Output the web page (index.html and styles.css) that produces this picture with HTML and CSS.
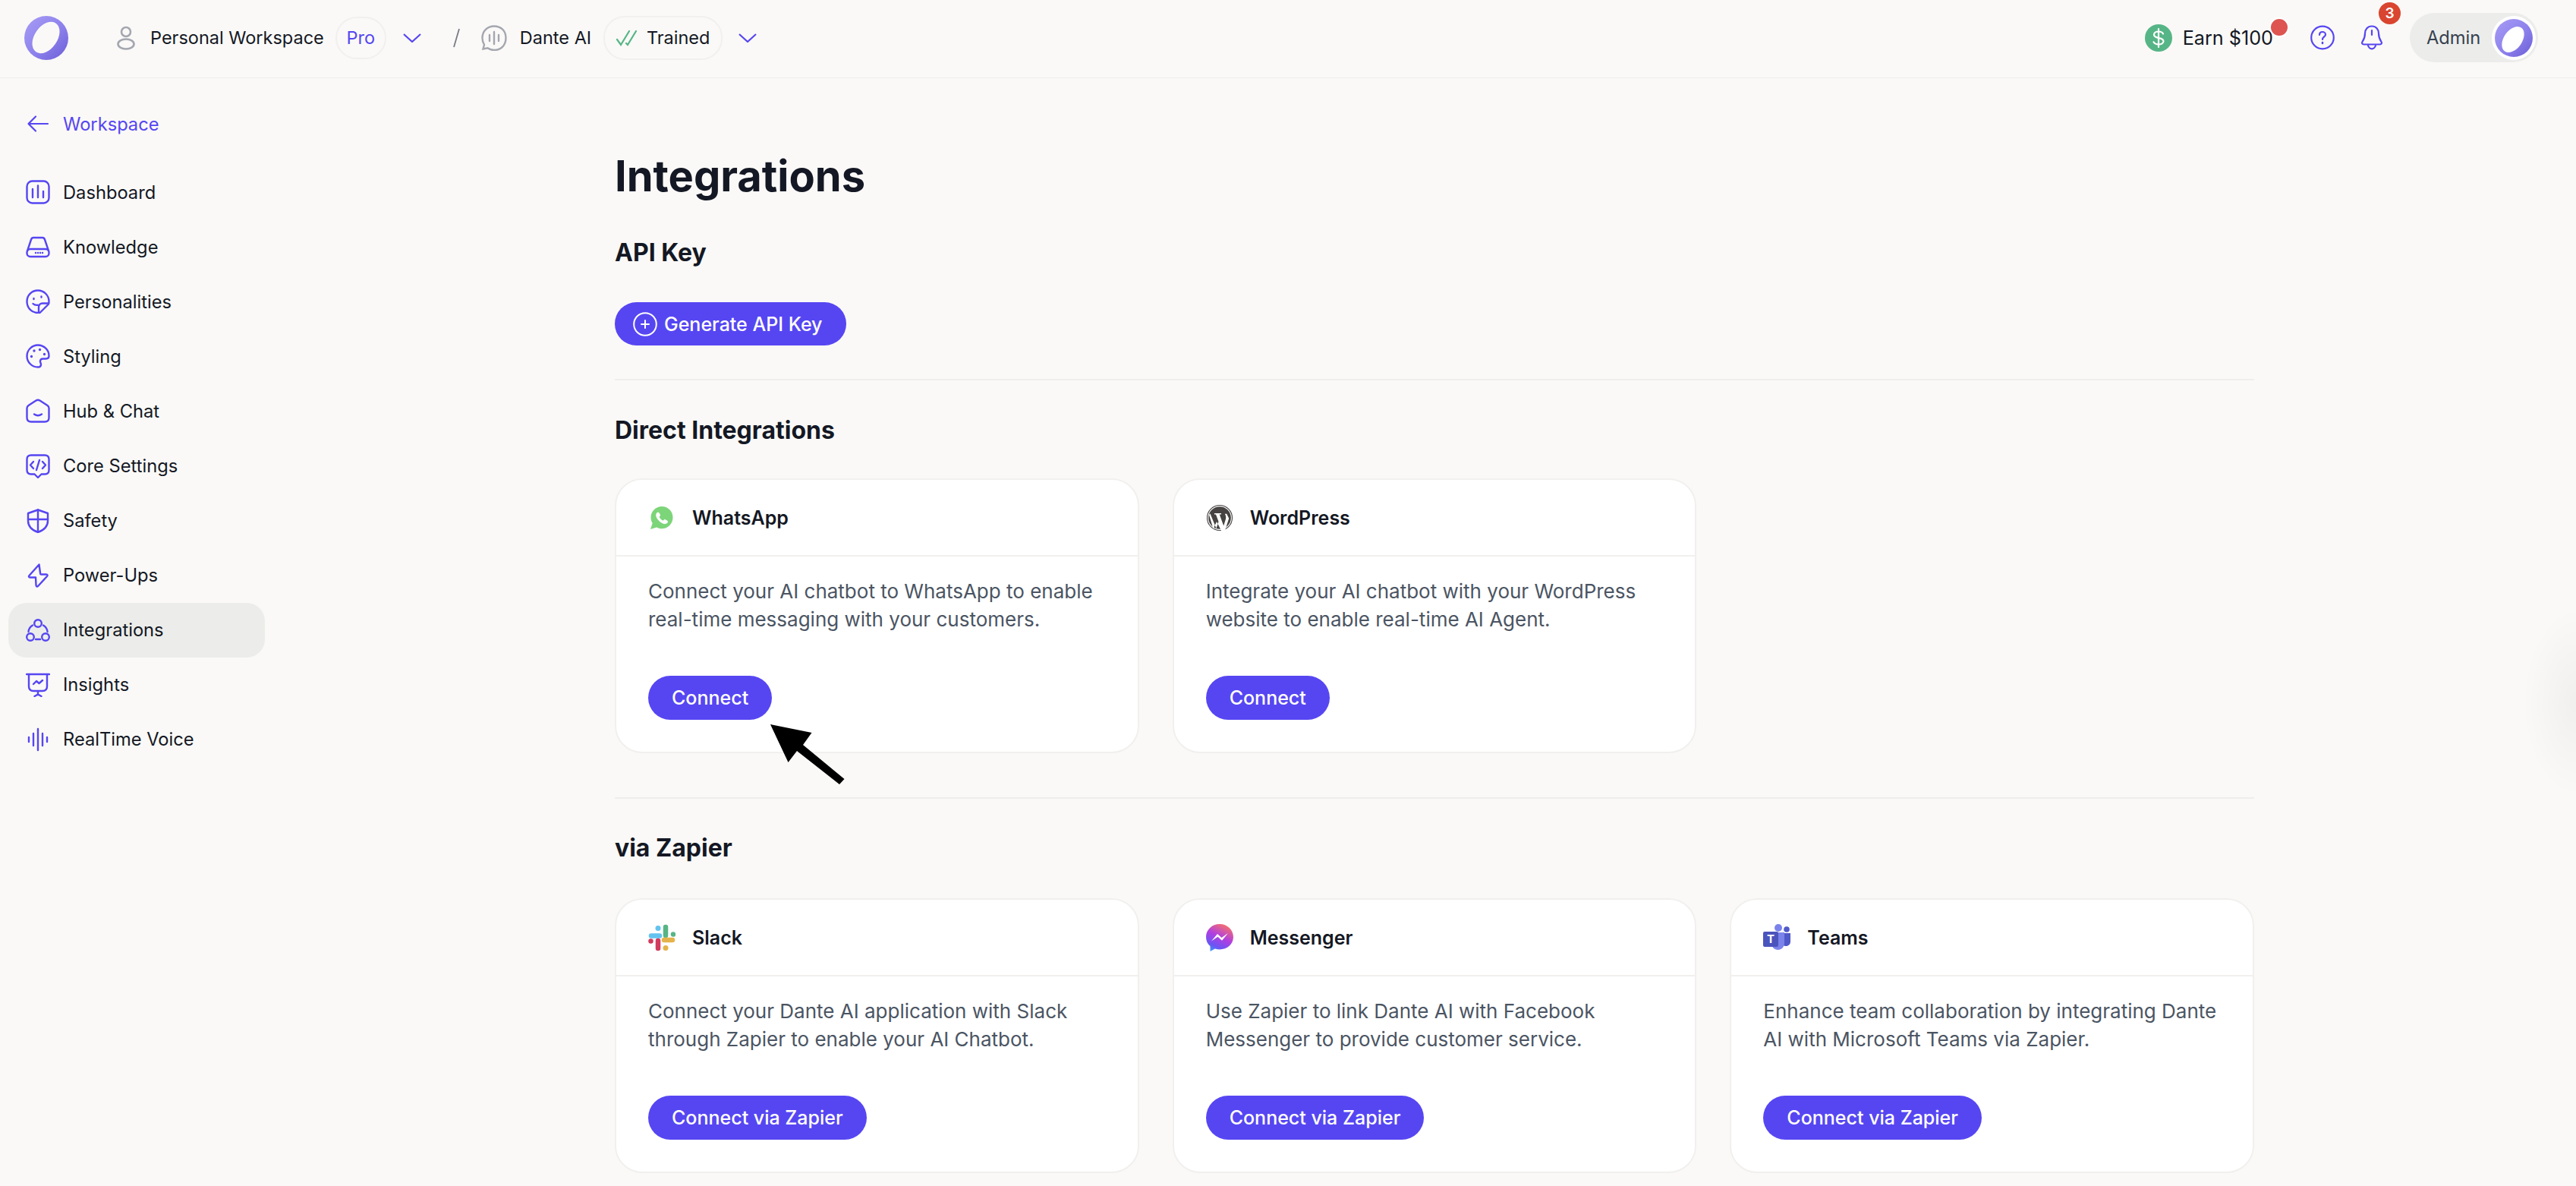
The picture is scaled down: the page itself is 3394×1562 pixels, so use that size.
FILE: index.html
```html
<!DOCTYPE html>
<html lang="en">
<head>
  <meta charset="UTF-8" />
  <title>Integrations - Dante AI</title>
  <link rel="stylesheet" href="styles.css">
</head>
<body>

<svg class="defs" width="0" height="0">
  <defs>
    <linearGradient id="ringGrad" x1="0" y1="0" x2="1" y2="1">
      <stop offset="0" stop-color="#a79df5"/>
      <stop offset="0.55" stop-color="#8d81ec"/>
      <stop offset="1" stop-color="#6a5dd6"/>
    </linearGradient>
    <linearGradient id="messengerGrad" x1="0.7" y1="0" x2="0.2" y2="1">
      <stop offset="0" stop-color="#f7716a"/>
      <stop offset="0.45" stop-color="#b13fe0"/>
      <stop offset="0.8" stop-color="#6a55f5"/>
      <stop offset="1" stop-color="#3f9cf5"/>
    </linearGradient>
  </defs>
</svg>

<header class="topbar">
  <div class="topbar-group">
    <svg class="logo" viewBox="0 0 58 58">
      <circle cx="29" cy="29" r="29" fill="url(#ringGrad)"/>
      <ellipse cx="28.500" cy="28.500" rx="15" ry="23" transform="rotate(35 28.500 28.500)" fill="#faf9f7"/>
    </svg>
    <svg class="ic-person" viewBox="0 0 24 32" fill="none" stroke="#a4a7b0" stroke-width="2.6">
      <circle cx="12" cy="8" r="6"/>
      <ellipse cx="12" cy="24" rx="10.500" ry="6.500"/>
    </svg>
    <span class="crumb workspace">Personal Workspace</span>
    <span class="pill pill-pro">Pro</span>
    <svg class="chevron chevron-first" viewBox="0 0 24 12" fill="none" stroke="#5646f2" stroke-width="2.2"><path d="M1 1l11 10L23 1"/></svg>
    <svg class="slash" viewBox="0 0 9 26" fill="none" stroke="#777b85" stroke-width="1.8"><path d="M8 1L1 25"/></svg>
    <svg class="ic-bubble" viewBox="0 0 34 34" fill="none" stroke="#a4a7b0" stroke-width="2.4" stroke-linecap="round">
      <path d="M17 1.500C8 1.500 1.500 8 1.500 17c0 3.500 1 6.500 2.500 9l-1.500 5.500 6-1.200c2.500 1.800 5.300 2.700 8.500 2.700 9 0 15.500-6.500 15.500-16S26 1.500 17 1.500z"/>
      <path d="M11 13v8M17 9v16M23 13v8"/>
    </svg>
    <span class="crumb chatbot">Dante AI</span>
    <span class="pill pill-trained">
      <svg class="ic-check" viewBox="0 0 27 22" fill="none" stroke="#56b586" stroke-width="2.2" stroke-linecap="round"><path d="M1 13l5 7L17 2M13 18l2 2L26 2"/></svg>
      Trained
    </span>
    <svg class="chevron chevron-second" viewBox="0 0 24 12" fill="none" stroke="#5646f2" stroke-width="2.2"><path d="M1 1l11 10L23 1"/></svg>
  </div>

  <div class="topbar-group">
    <svg class="ic-dollar" viewBox="0 0 36 36">
      <circle cx="18" cy="18" r="18" fill="#56b586"/>
      <path d="M24 12.500C23 10.500 21 9.500 18 9.500c-3.500 0-6 1.800-6 4.300 0 6 12.500 2.500 12.500 8.500 0 2.500-2.800 4.200-6.500 4.200-3 0-5.300-1.100-6.500-3.200M18 6v24" fill="none" stroke="#fff" stroke-width="2.2" stroke-linecap="round"/>
    </svg>
    <span class="earn">Earn $100<i class="earn-dot"></i></span>
    <svg class="ic-help" viewBox="0 0 32 32" fill="none" stroke="#5646f2" stroke-width="2.2">
      <circle cx="16" cy="16" r="14.800"/>
      <path d="M12 12.500c0-2.500 1.800-4 4-4s4 1.500 4 3.500c0 3-4 3-4 6.500" stroke-linecap="round"/>
      <path d="M16 22.500v1" stroke-linecap="round" stroke-width="2.600"/>
    </svg>
    <span class="bell">
      <svg viewBox="0 0 30 33" fill="none" stroke="#5646f2" stroke-width="2.200" stroke-linecap="round" stroke-linejoin="round">
        <path d="M15 1.500c-5.500 0-9 4-9 9.500 0 6-1.500 8-3.500 11-1 1.500-.5 3.500 2 3.500h21c2.500 0 3-2 2-3.500-2-3-3.500-5-3.500-11 0-5.500-3.500-9.500-9-9.500z"/>
        <path d="M10 27c1 2.800 3 4.300 5 4.300s4-1.500 5-4.300M15 7v6"/>
      </svg>
      <i class="bell-count">3</i>
    </span>
    <div class="admin">
      <span>Admin</span>
      <span class="admin-avatar">
        <svg viewBox="0 0 58 58">
          <circle cx="29" cy="29" r="25" fill="url(#ringGrad)"/>
          <ellipse cx="28" cy="31" rx="12" ry="19" transform="rotate(35 28 31)" fill="#fff"/>
        </svg>
      </span>
    </div>
  </div>
</header>

<div class="layout">
  <aside class="sidebar">
    <a class="back-link">
      <svg viewBox="0 0 32 32" fill="none" stroke="#5646f2" stroke-width="2.200" stroke-linecap="round" stroke-linejoin="round"><path d="M29 16H4M13 6.500L3.500 16l9.500 9.500"/></svg>
      Workspace
    </a>
    <nav class="side-nav">
      <a class="side-item">
        <svg viewBox="0 0 32 32"><rect x="1.500" y="1.500" width="29" height="29" rx="7"/><path d="M9 12v11M16 7.500V23M23 15v8"/></svg>
        Dashboard
      </a>
      <a class="side-item">
        <svg viewBox="0 0 32 32"><path d="M2 21.500L7 6.500c.5-1.500 1.500-2.500 3-2.500h12c1.500 0 2.500 1 3 2.500l5 15"/><rect x="1.500" y="19" width="29" height="10" rx="4.500"/><path d="M13 24h.1M16 24h.1M19 24h.1M22 24h.1"/></svg>
        Knowledge
      </a>
      <a class="side-item">
        <svg viewBox="0 0 32 32"><path d="M16 31C7.500 31 1.500 24.500 1.500 16S8 1.500 16 1.500 30.500 8 30.500 16c0 1.500-.2 2.500-.5 3.500L19 30.500c-1 .3-2 .5-3 .5z"/><path d="M30 18.500h-8c-3 0-5 2-5 5v7.500M10.500 12v1M20.500 9.500v1M9.500 19c1.500 1.500 3.500 2 6 1.800"/></svg>
        Personalities
      </a>
      <a class="side-item">
        <svg viewBox="0 0 32 32"><path d="M16 1.500C8 1.500 1.500 8 1.500 16S8 30.500 16 30.500c2.500 0 4-1.500 4-3.500 0-2-1.500-3-1-5 .4-1.500 1.500-2.500 3.500-2.500h4c3 0 4-2 4-4C30.500 8 24 1.500 16 1.500z"/><path d="M7.500 16.500v.1M11 9v.1M18.500 7.500v.1M24.500 13.500v.1" stroke-width="3.400"/></svg>
        Styling
      </a>
      <a class="side-item">
        <svg viewBox="0 0 32 32"><path d="M3.500 9L13.500 2.500c1.700-1.100 3.300-1.100 5 0L28.500 9c1.400.9 2 2.200 2 3.800V25c0 3.500-2 5.500-5.500 5.500H7c-3.500 0-5.500-2-5.500-5.500V12.800c0-1.600.6-2.900 2-3.800z"/><path d="M11 20.500c3 2 7 2 10 0"/></svg>
        Hub &amp; Chat
      </a>
      <a class="side-item">
        <svg viewBox="0 0 32 32"><path d="M7 1.500h18c3.500 0 5.500 2 5.500 5.500v14c0 3.500-2 5.500-5.500 5.500h-4.500L16 31l-4.500-4.500H7c-3.500 0-5.500-2-5.500-5.500V7c0-3.500 2-5.500 5.500-5.500z"/><path d="M10 10l-4 4.500 4 4.500M22 10l4 4.500-4 4.500M18 8l-4 13"/></svg>
        Core Settings
      </a>
      <a class="side-item">
        <svg viewBox="0 0 32 32"><path d="M16 1.500L3 6v10c0 8 6 12.500 13 15 7-2.500 13-7 13-15V6z"/><path d="M16 1.500V31M3 14h26"/></svg>
        Safety
      </a>
      <a class="side-item">
        <svg viewBox="0 0 32 32"><path d="M17.500 1.500L4.500 16c-1 1-.5 2.500 1 2.500h6l1.500 0 .5 10c0 2 1.500 2.500 2.500 1.500L28 17c1-1.200.5-2.500-1-2.500h-6.500c-1.500 0-1.500-.5-1.500-2z"/></svg>
        Power-Ups
      </a>
      <a class="side-item is-active">
        <svg viewBox="0 0 32 32"><circle cx="16" cy="7" r="4.800"/><circle cx="6" cy="25" r="4.800"/><circle cx="26" cy="25" r="4.800"/><path d="M9 9.500C5.500 11.500 3.800 14.500 3.500 18M23 9.500c3.500 2 5.200 5 5.500 8.500M13 28h6"/></svg>
        Integrations
      </a>
      <a class="side-item">
        <svg viewBox="0 0 32 32"><path d="M1 2h30M4 2v16c0 4 2 6 6 6h12c4 0 6-2 6-6V2M16 24v5M11.500 31l4.500-2.500 4.500 2.500M10 15l4-4 3.500 3 4.500-4"/></svg>
        Insights
      </a>
      <a class="side-item">
        <svg viewBox="0 0 32 32"><path d="M4 13v6M10 8v16M16 2v28M22 8v16M28 13v6"/></svg>
        RealTime Voice
      </a>
    </nav>
  </aside>

  <main class="content">
    <h1>Integrations</h1>

    <section class="section section-api">
      <h2>API Key</h2>
      <button class="btn btn-api" type="button">
        <svg viewBox="0 0 32 32" fill="none" stroke="#fff" stroke-width="2" stroke-linecap="round"><circle cx="16" cy="16" r="14.800"/><path d="M16 11v10M11 16h10"/></svg>
        Generate API Key
      </button>
    </section>

    <section class="section section-direct">
      <h2>Direct Integrations</h2>
      <div class="card-grid">
        <article class="card">
          <div class="card-head">
            <span class="card-icon">
              <svg viewBox="0 0 36 36">
                <path d="M18 3C10 3 3.500 9.500 3.500 17.500c0 2.800.8 5.400 2.200 7.600L3 33l8.200-2.500c2 1.200 4.300 1.800 6.800 1.800 8 0 14.500-6.500 14.500-14.800S26 3 18 3z" fill="#7dd57a"/>
                <path d="M13 10.500c-.8 0-2.800 1.200-2.800 4 0 4.500 6.800 11.500 11.500 11.500 2.800 0 4.300-2 4.300-3 0-1.200-3.500-3-4.300-3-.8 0-1.300 1.500-2.200 1.500-1.200 0-4.800-3.500-4.800-4.800 0-.8 1.400-1.300 1.400-2.200 0-1-2-4-3.100-4z" fill="#fff"/>
              </svg>
            </span>
            <h3>WhatsApp</h3>
          </div>
          <div class="card-body">
            <p>Connect your AI chatbot to WhatsApp to enable real-time messaging with your customers.</p>
            <button class="btn" type="button">Connect</button>
          </div>
        </article>

        <article class="card">
          <div class="card-head">
            <span class="card-icon">
              <svg viewBox="0 0 36 36">
                <circle cx="18" cy="18" r="16.500" fill="#fff" stroke="#464342" stroke-width="1.100"/>
                <circle cx="18" cy="18" r="14.800" fill="#464342"/>
                <path d="M5.500 12.500L13.500 32l3-9-3.500-9.500h-2V12h9v1.500h-2.300l5.500 15 2.500-8c1-3 .6-5.500-1-7.800h2.500l3 6-6 18.500h-3L14 23l-4.500 9.500L4 14z" fill="#fff"/>
              </svg>
            </span>
            <h3>WordPress</h3>
          </div>
          <div class="card-body">
            <p>Integrate your AI chatbot with your WordPress website to enable real-time AI Agent.</p>
            <button class="btn" type="button">Connect</button>
          </div>
        </article>
      </div>
    </section>

    <section class="section section-zapier">
      <h2>via Zapier</h2>
      <div class="card-grid">
        <article class="card">
          <div class="card-head">
            <span class="card-icon">
              <svg viewBox="0 0 36 36" fill="none" stroke-linecap="round">
                <path d="M4 15.500h11" stroke="#64c3ef" stroke-width="6.500"/>
                <path d="M13 5.500v.1" stroke="#64c3ef" stroke-width="7"/>
                <path d="M23 4v11" stroke="#56b586" stroke-width="6.500"/>
                <path d="M33 13.500v.1" stroke="#56b586" stroke-width="6.500"/>
                <path d="M21 21h11" stroke="#e5b34b" stroke-width="6.500"/>
                <path d="M23 31.500v.1" stroke="#e5b34b" stroke-width="7"/>
                <path d="M13 22v10" stroke="#d13a5b" stroke-width="6.500"/>
                <path d="M3.500 22.500v.1" stroke="#d13a5b" stroke-width="6.500"/>
              </svg>
            </span>
            <h3>Slack</h3>
          </div>
          <div class="card-body">
            <p>Connect your Dante AI application with Slack through Zapier to enable your AI Chatbot.</p>
            <button class="btn" type="button">Connect via Zapier</button>
          </div>
        </article>

        <article class="card">
          <div class="card-head">
            <span class="card-icon">
              <svg viewBox="0 0 36 36">
                <path d="M18 0C8 0 0 7.500 0 17c0 5 2 9.300 5.500 12.300V36l6.300-3.500c2 .6 4 .9 6.200.9 10 0 18-7.200 18-16.400S28 0 18 0z" fill="url(#messengerGrad)"/>
                <path d="M7 22.500l8-9.500 5.500 5 8.500-6-8 9.800-5.500-5z" fill="#fff"/>
              </svg>
            </span>
            <h3>Messenger</h3>
          </div>
          <div class="card-body">
            <p>Use Zapier to link Dante AI with Facebook Messenger to provide customer service.</p>
            <button class="btn" type="button">Connect via Zapier</button>
          </div>
        </article>

        <article class="card">
          <div class="card-head">
            <span class="card-icon">
              <svg viewBox="0 0 36 36">
                <circle cx="31" cy="7" r="3.800" fill="#5059c9"/>
                <path d="M24 12h12v11c0 3.500-2.500 6-6 6s-6-2.500-6-6z" fill="#5059c9"/>
                <circle cx="20" cy="5" r="5" fill="#7b83eb"/>
                <path d="M11 11h17v14c0 5-3.800 9-8.500 9S11 30 11 25z" fill="#7b83eb"/>
                <rect x="0" y="10" width="20" height="20" rx="2" fill="#4b53bc"/>
                <text x="10" y="25" class="teams-t">T</text>
              </svg>
            </span>
            <h3>Teams</h3>
          </div>
          <div class="card-body">
            <p>Enhance team collaboration by integrating Dante AI with Microsoft Teams via Zapier.</p>
            <button class="btn" type="button">Connect via Zapier</button>
          </div>
        </article>
      </div>
    </section>

    <svg class="annotation-arrow" viewBox="0 0 100 82">
      <path d="M0 0L54.500 11 43 27 97.500 72 91 79 35 35 23.500 50z" fill="#000"/>
    </svg>
  </main>
</div>

<div class="edge-shadow"></div>

</body>
</html>
```

FILE: styles.css
```css
* {
  box-sizing: border-box;
}
html, body {
  height: 100%;
}
body {
  margin: 0;
  overflow: hidden;
  position: relative;
  background: #faf9f7;
  color: #141824;
  font-family: 'Inter', sans-serif;
  font-size: 23.7px;
}
.defs {
  position: absolute;
}
h1, h2, h3, p {
  margin: 0;
}
svg {
  display: block;
  flex: none;
}

/* top bar */
.topbar {
  height: 103px;
  display: flex;
  justify-content: space-between;
  align-items: center;
  padding: 0 50px 3px 32px;
  border-bottom: 1px solid #efeeec;
}
.topbar-group {
  display: flex;
  align-items: center;
}
.logo {
  width: 58px;
  height: 58px;
  margin-right: 64px;
}
.ic-person {
  width: 24px;
  height: 32px;
  margin-right: 20px;
}
.crumb {
  font-size: 23.5px;
  white-space: nowrap;
}
.workspace {
  margin-right: 15px;
}
.chatbot {
  margin-right: 16px;
}
.pill {
  display: flex;
  align-items: center;
  justify-content: center;
  border: 2px solid #f1f0ee;
  border-radius: 28px;
  font-size: 23.5px;
  white-space: nowrap;
}
.pill-pro {
  width: 67px;
  height: 56px;
  color: #5646f2;
}
.pill-trained {
  width: 157px;
  height: 58px;
  gap: 13px;
}
.ic-check {
  width: 27px;
  height: 22px;
}
.chevron {
  width: 24px;
  height: 12px;
}
.chevron-first {
  margin-left: 22px;
}
.chevron-second {
  margin-left: 21px;
}
.slash {
  width: 9px;
  height: 26px;
  margin: 0 28px 0 42px;
}
.ic-bubble {
  width: 34px;
  height: 34px;
  margin-right: 17px;
}
.ic-dollar {
  width: 36px;
  height: 36px;
  margin-right: 14px;
}
.earn {
  position: relative;
  margin-right: 49px;
  font-size: 25.2px;
  white-space: nowrap;
}
.earn-dot {
  position: absolute;
  top: -12px;
  right: -21px;
  width: 26px;
  height: 26px;
  border: 2px solid #fff;
  border-radius: 50%;
  background: #de5450;
}
.ic-help {
  width: 32px;
  height: 33px;
  margin-right: 34px;
}
.bell {
  position: relative;
  margin-right: 35px;
}
.bell svg {
  width: 30px;
  height: 33px;
}
.bell-count {
  position: absolute;
  top: -30px;
  right: -23px;
  width: 29px;
  height: 29px;
  border-radius: 50%;
  background: #d9452f;
  color: #fff;
  font-style: normal;
  font-size: 19px;
  font-weight: 600;
  line-height: 29px;
  text-align: center;
}
.admin {
  width: 169px;
  height: 65px;
  display: flex;
  align-items: center;
  justify-content: space-between;
  padding: 0 3px 0 22px;
  border-radius: 33px;
  background: #ecedea;
  color: #374151;
}
.admin-avatar {
  width: 58px;
  height: 58px;
  border-radius: 50%;
  background: #fff;
}

/* sidebar */
.layout {
  display: flex;
}
.sidebar {
  width: 360px;
  flex: none;
  padding: 24px 11px 0;
}
.back-link {
  height: 72px;
  display: flex;
  align-items: center;
  gap: 17px;
  padding-left: 23px;
  color: #5646f2;
}
.back-link svg {
  width: 32px;
  height: 32px;
}
.side-nav {
  margin-top: 18px;
}
.side-item {
  height: 72.1px;
  display: flex;
  align-items: center;
  gap: 17px;
  padding-left: 23px;
  border-radius: 24px;
  width: 338px;
}
.side-item svg {
  width: 32px;
  height: 32px;
  fill: none;
  stroke: #5646f2;
  stroke-width: 2.4;
  stroke-linecap: round;
  stroke-linejoin: round;
}
.side-item.is-active {
  background: #ecedea;
}

/* main column */
.content {
  position: relative;
  width: 2160px;
  margin-left: 450px;
  padding-top: 94px;
  flex: none;
}
h1 {
  font-size: 56px;
  font-weight: 700;
  line-height: 70px;
  margin-bottom: 44px;
}
h2 {
  font-size: 32px;
  font-weight: 700;
  line-height: 44px;
  margin-bottom: 43px;
}
.section {
  border-bottom: 2px solid #efeeec;
}
.section-api {
  padding-bottom: 44px;
}
.section-direct {
  padding-top: 44px;
  padding-bottom: 58px;
}
.section-direct h2 {
  margin-bottom: 41px;
}
.section-zapier {
  padding-top: 43px;
  border-bottom: none;
}
.section-zapier h2 {
  margin-bottom: 44px;
}
.card-grid {
  display: grid;
  grid-template-columns: repeat(3, 1fr);
  gap: 44px;
}
.card {
  height: 362px;
  border: 2px solid #f1f0ee;
  border-radius: 36px;
  background: #fff;
}
.card-head {
  height: 101px;
  display: flex;
  align-items: center;
  gap: 22px;
  padding-left: 42px;
  border-bottom: 2px solid #f1f0ee;
}
.card-icon {
  width: 36px;
  height: 36px;
}
h3 {
  font-size: 25px;
  font-weight: 600;
}
.card-body {
  padding: 28px 42px 0;
}
.card-body p {
  height: 73px;
  margin-bottom: 56px;
  color: #4b5563;
  font-size: 26px;
  line-height: 36.5px;
}
.btn {
  height: 58px;
  display: inline-flex;
  align-items: center;
  padding: 0 31px;
  border: none;
  border-radius: 29px;
  background: #5646f2;
  color: #fff;
  font-family: inherit;
  font-size: 25px;
  font-weight: 500;
}
.btn-api {
  height: 57px;
  padding: 0 31px 0 24px;
  gap: 9px;
}
.btn-api svg {
  width: 32px;
  height: 32px;
}
.teams-t {
  fill: #fff;
  font-family: 'Inter', sans-serif;
  font-size: 15px;
  font-weight: 700;
  text-anchor: middle;
}

/* arrow drawn over the card */
.annotation-arrow {
  position: absolute;
  left: 205px;
  top: 851px;
  width: 100px;
  height: 82px;
}

.edge-shadow {
  position: absolute;
  right: 0;
  top: 800px;
  width: 70px;
  height: 250px;
  background: radial-gradient(ellipse 70px 125px at 100% 50%, rgba(0,0,0,0.04), rgba(0,0,0,0));
}
```
